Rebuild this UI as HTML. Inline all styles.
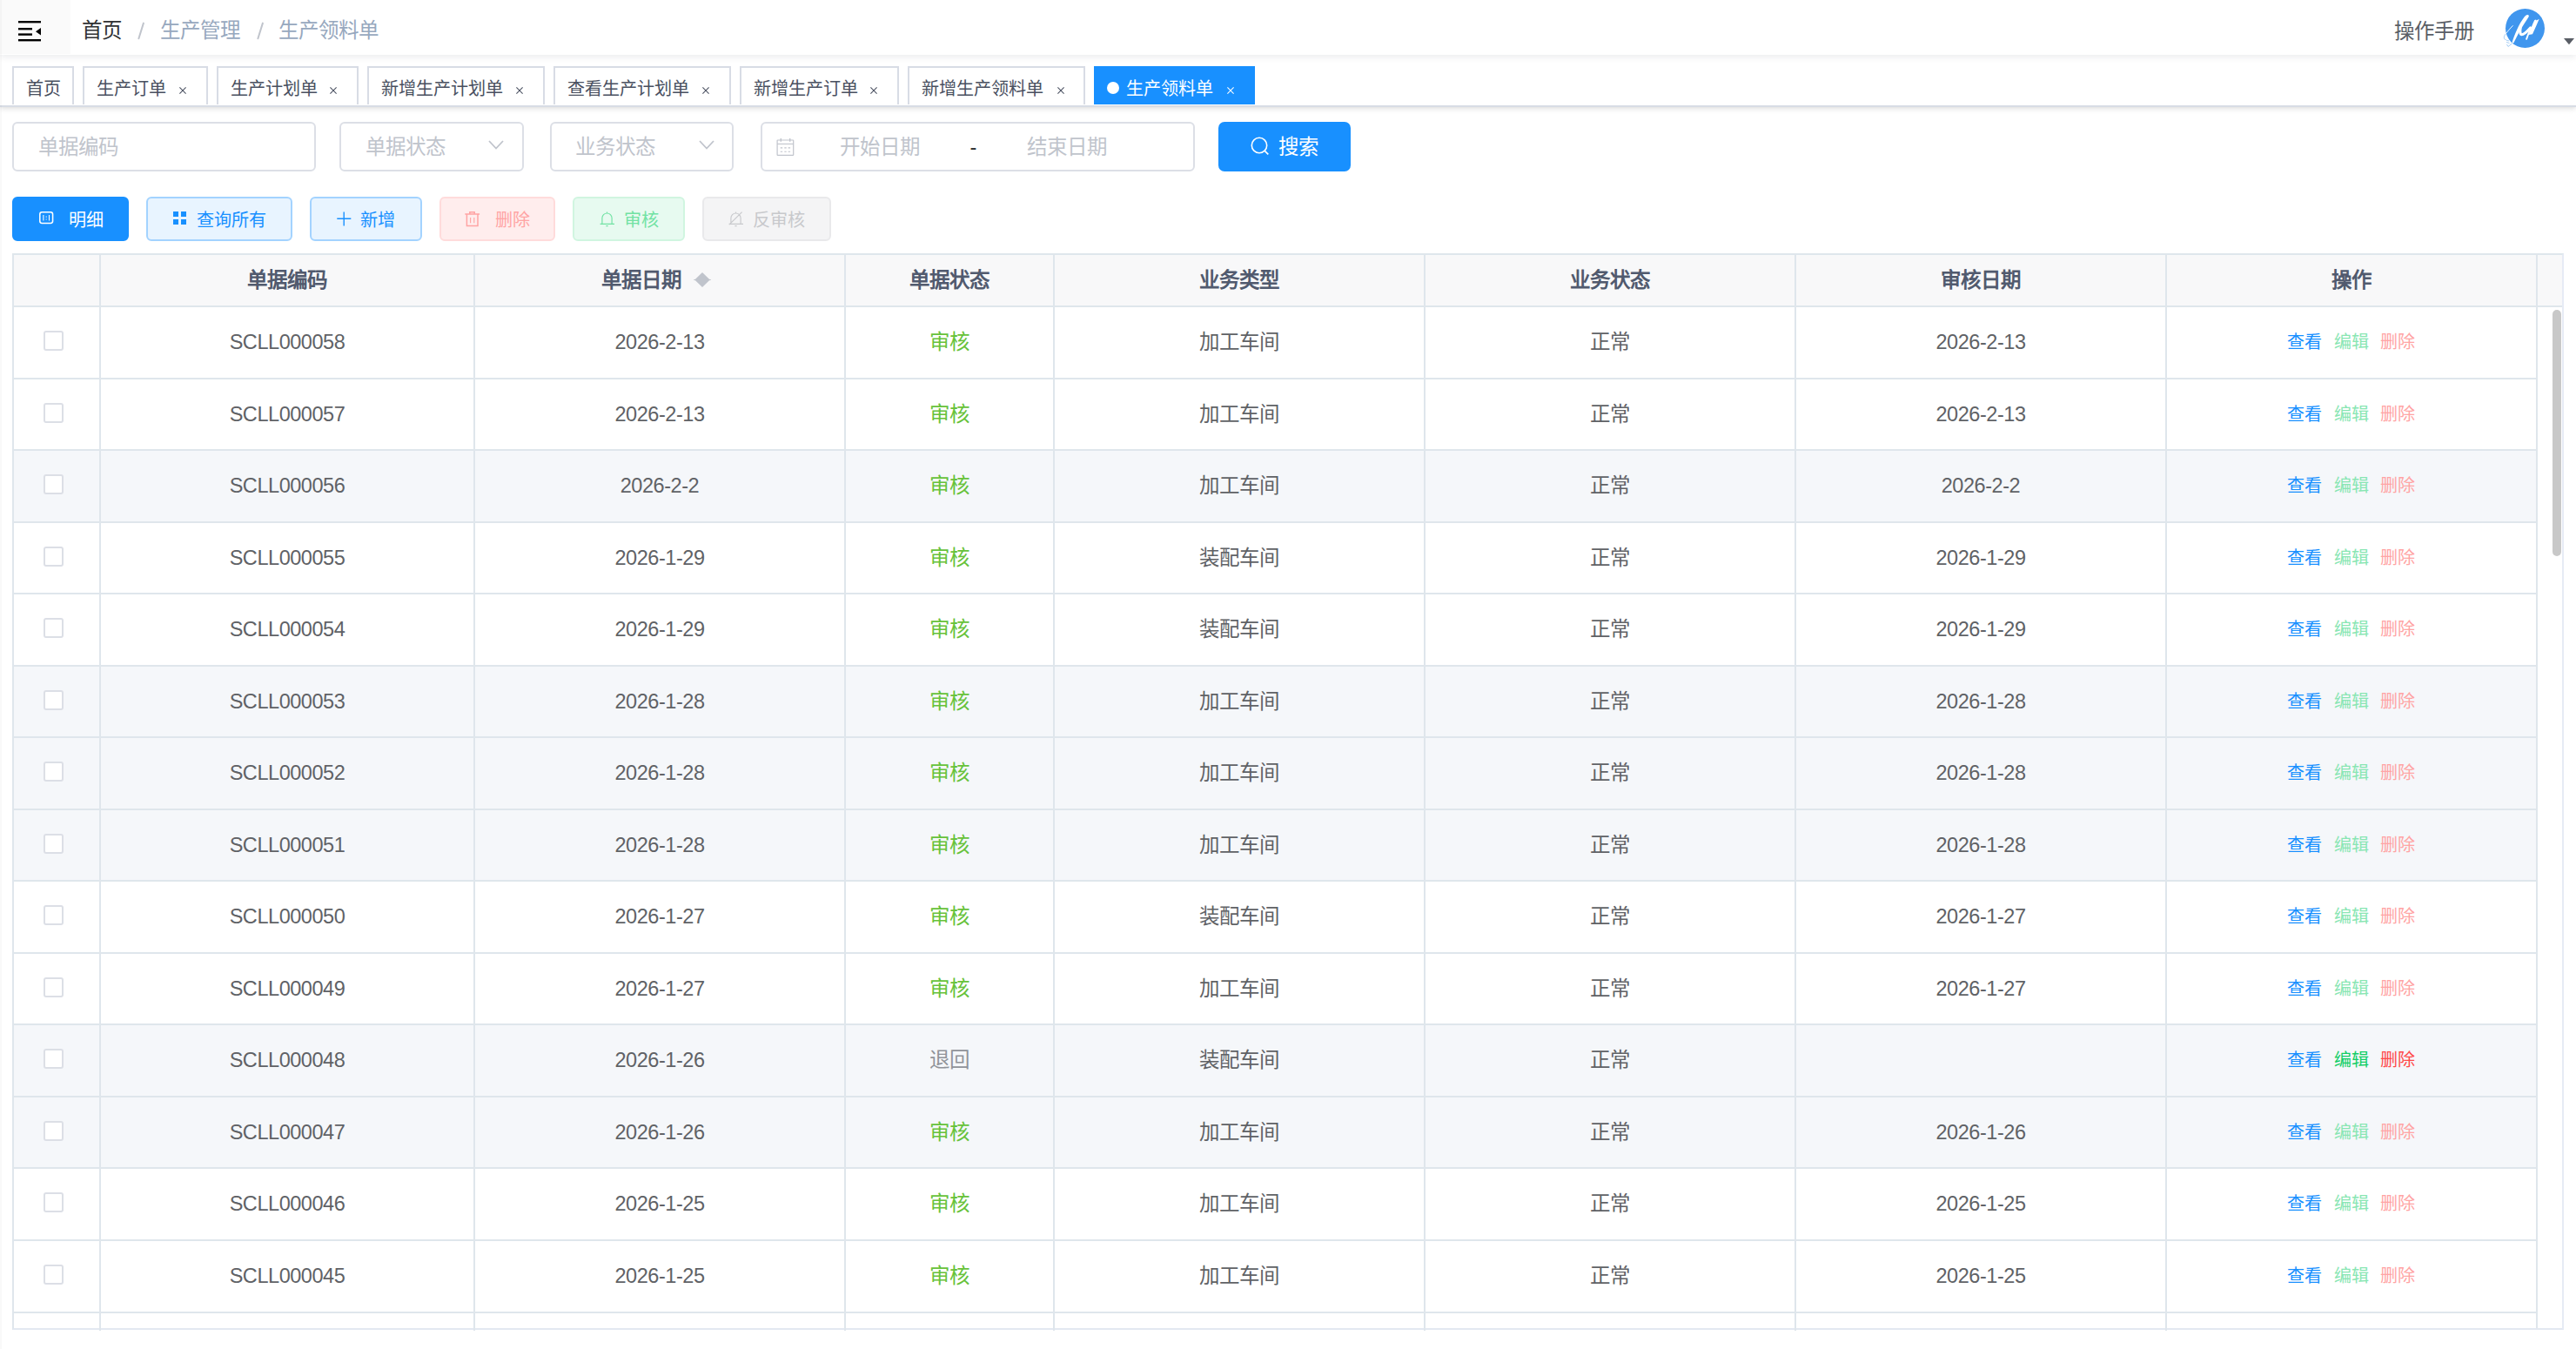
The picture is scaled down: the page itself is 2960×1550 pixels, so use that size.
<!DOCTYPE html><html lang="zh-CN"><head><meta charset="utf-8"><title>生产领料单</title><style>
*{box-sizing:border-box;margin:0;padding:0}
html,body{width:2960px;height:1550px;overflow:hidden;background:#fff;font-family:"Liberation Sans",sans-serif;position:relative}
.a{position:absolute;white-space:nowrap}
.t14{font-size:23.5px;line-height:1}
.t12{font-size:20.1px;line-height:1}
#nav{left:0;top:0;width:2960px;height:63px;background:#fff;box-shadow:0 2px 8px rgba(0,21,41,.09);z-index:3}
#ham{left:0;top:0;width:81px;height:62px;background:#fafafa}
#tags{left:0;top:63px;width:2960px;height:60px;background:#fff;border-bottom:2px solid #d8dce5;box-shadow:0 2px 6px 0 rgba(0,0,0,.12),0 0 3px 0 rgba(0,0,0,.04);z-index:2}
.tag{top:13px;height:44px;border:2px solid #d8dce5;border-bottom:none;background:#fff;color:#495060}
.tag.on{background:#1890ff;border-color:#1890ff;color:#fff}
.inp{top:140px;height:57px;border:2px solid #dcdfe6;border-radius:6px;background:#fff}
.ph{color:#c0c4cc}
.btn{top:226px;height:51px;border:2px solid;border-radius:6px}
#tbl{left:14px;top:291px;width:2932px;height:1237px;border:2px solid #dfe6ec;border-right-color:#e6ebf5;border-bottom-color:#e3e8f1}
.hl{left:0;height:2px;background:#dfe6ec}
.vl{top:0;width:2px;background:#dfe6ec}
.cell{text-align:center;color:#606266}
.num{letter-spacing:-0.45px}
.hd{color:#515a6e;font-weight:700}
.cb{width:23px;height:23px;border:2px solid #dcdfe6;border-radius:3px;background:#fff}
</style></head><body>
<div class="a" style="left:0;top:0;width:2px;height:1550px;background:rgba(0,0,0,.025);z-index:5"></div>
<div id="nav" class="a">
<div id="ham" class="a"></div>
<svg class="a" style="left:21px;top:24px" width="27" height="24" viewBox="0 0 27 24"><rect x="0" y="0" width="26" height="2.4" fill="#000"/><rect x="0" y="8" width="16" height="2.4" fill="#000"/><rect x="0" y="14.4" width="16" height="2.4" fill="#000"/><rect x="0" y="21" width="26" height="2.4" fill="#000"/><path d="M26 8 L26 16.6 L20 12.3 Z" fill="#000"/></svg>
<span class="a t14" style="left:94px;top:24px;color:#303133">首页</span>
<svg class="a" style="left:155px;top:24px" width="14" height="24" viewBox="0 0 14 24"><path d="M9.9 2.6 L4.4 20.2" stroke="#c0c4cc" stroke-width="2" stroke-linecap="round"/></svg>
<span class="a t14" style="left:183.5px;top:24px;color:#97a8be">生产管理</span>
<svg class="a" style="left:291.5px;top:24px" width="14" height="24" viewBox="0 0 14 24"><path d="M9.9 2.6 L4.4 20.2" stroke="#c0c4cc" stroke-width="2" stroke-linecap="round"/></svg>
<span class="a t14" style="left:320px;top:24px;color:#97a8be">生产领料单</span>
<span class="a t14" style="left:2751px;top:25px;color:#5a5e66">操作手册</span>
<div class="a" style="left:2879px;top:10px;width:45px;height:45px;border-radius:50%;background:#4096ee"></div>
<svg class="a" style="left:2870px;top:0px" width="60" height="60" viewBox="0 0 60 60"><path d="M34.4 16.9 C35.9 17 36.2 18.5 35.5 19.6 C33 23.5 30.5 27.5 28.8 30 C26 34.5 23 40 20.5 45 L18.4 49.3 L16.3 49.7 C17.5 45.5 19.5 40 22 34.5 C24.5 29 27.5 23.5 30.8 19.3 C31.8 18 33 16.8 34.4 16.9 Z" fill="#fff"/><path d="M26.2 31.8 C25.4 36.5 25.8 39.6 27.6 39.8 C30 40 34 36 37.6 32" stroke="#fff" stroke-width="3.1" fill="none" stroke-linecap="round"/><path d="M37.6 32.6 C36 37 34.3 41.5 33.1 44.8" stroke="#fff" stroke-width="1.9" fill="none" stroke-linecap="round"/><path d="M42.3 23 L44 22.6 L44.6 23.6 L47.7 21.8 C45.5 27 43 33 40 39.2 L35.6 40 C37.5 34 39.8 28 42.3 23 Z" fill="#fff"/><path d="M17.6 29.3 C14 33 11.5 36 9.3 38.8" stroke="#fff" stroke-width="0.9" fill="none"/><path d="M9.3 38.8 C8.4 40 7.6 41 7.4 42.5 C7.2 44.5 8 45.5 9.5 45.5 M9.8 46.2 L13.2 47 M10 48.5 L13.5 49.5 M10.5 51 L12 53.5 L16.5 50" stroke="#8fc0f2" stroke-width="0.8" fill="none"/></svg>
<svg class="a" style="left:2946px;top:44px" width="12" height="8" viewBox="0 0 12 8"><path d="M0 0 L12 0 L6 7.2 Z" fill="#5a5e66"/></svg>
</div>
<div id="tags" class="a">
<div class="a tag" style="left:14px;width:71px">
<span class="a t12" style="left:14px;top:14px">首页</span>
</div>
<div class="a tag" style="left:95px;width:143.5px">
<span class="a t12" style="left:14px;top:14px">生产订单</span>
<span class="a" style="right:22.5px;top:22px;width:8px;height:8px"><svg width="8" height="8" viewBox="0 0 8 8" style="display:block"><path d="M0.4 0.4 L7.6 7.6 M7.6 0.4 L0.4 7.6" stroke="currentColor" stroke-width="1.05"/></svg></span>
</div>
<div class="a tag" style="left:249px;width:162.5px">
<span class="a t12" style="left:14px;top:14px">生产计划单</span>
<span class="a" style="right:22.5px;top:22px;width:8px;height:8px"><svg width="8" height="8" viewBox="0 0 8 8" style="display:block"><path d="M0.4 0.4 L7.6 7.6 M7.6 0.4 L0.4 7.6" stroke="currentColor" stroke-width="1.05"/></svg></span>
</div>
<div class="a tag" style="left:422px;width:203.5px">
<span class="a t12" style="left:14px;top:14px">新增生产计划单</span>
<span class="a" style="right:22.5px;top:22px;width:8px;height:8px"><svg width="8" height="8" viewBox="0 0 8 8" style="display:block"><path d="M0.4 0.4 L7.6 7.6 M7.6 0.4 L0.4 7.6" stroke="currentColor" stroke-width="1.05"/></svg></span>
</div>
<div class="a tag" style="left:636px;width:203.5px">
<span class="a t12" style="left:14px;top:14px">查看生产计划单</span>
<span class="a" style="right:22.5px;top:22px;width:8px;height:8px"><svg width="8" height="8" viewBox="0 0 8 8" style="display:block"><path d="M0.4 0.4 L7.6 7.6 M7.6 0.4 L0.4 7.6" stroke="currentColor" stroke-width="1.05"/></svg></span>
</div>
<div class="a tag" style="left:850px;width:182.5px">
<span class="a t12" style="left:14px;top:14px">新增生产订单</span>
<span class="a" style="right:22.5px;top:22px;width:8px;height:8px"><svg width="8" height="8" viewBox="0 0 8 8" style="display:block"><path d="M0.4 0.4 L7.6 7.6 M7.6 0.4 L0.4 7.6" stroke="currentColor" stroke-width="1.05"/></svg></span>
</div>
<div class="a tag" style="left:1043px;width:204px">
<span class="a t12" style="left:14px;top:14px">新增生产领料单</span>
<span class="a" style="right:22.5px;top:22px;width:8px;height:8px"><svg width="8" height="8" viewBox="0 0 8 8" style="display:block"><path d="M0.4 0.4 L7.6 7.6 M7.6 0.4 L0.4 7.6" stroke="currentColor" stroke-width="1.05"/></svg></span>
</div>
<div class="a tag on" style="left:1257px;width:185px">
<div class="a" style="left:13px;top:16px;width:14px;height:14px;border-radius:50%;background:#fff"></div>
<span class="a t12" style="left:35px;top:14px">生产领料单</span>
<span class="a" style="right:22.5px;top:22px;width:8px;height:8px"><svg width="8" height="8" viewBox="0 0 8 8" style="display:block"><path d="M0.4 0.4 L7.6 7.6 M7.6 0.4 L0.4 7.6" stroke="currentColor" stroke-width="1.05"/></svg></span>
</div>
</div>
<div class="a inp" style="left:14px;width:349px"><span class="a t14 ph" style="left:28px;top:16px">单据编码</span></div>
<div class="a inp" style="left:390px;width:211.5px"><span class="a t14 ph" style="left:28px;top:16px">单据状态</span><span class="a" style="left:169px;top:19px"><svg width="18" height="11" viewBox="0 0 18 11" style="display:block"><path d="M1 1 L9 9.5 L17 1" fill="none" stroke="#c0c4cc" stroke-width="1.8"/></svg></span></div>
<div class="a inp" style="left:632px;width:210.5px"><span class="a t14 ph" style="left:27px;top:16px">业务状态</span><span class="a" style="left:169px;top:19px"><svg width="18" height="11" viewBox="0 0 18 11" style="display:block"><path d="M1 1 L9 9.5 L17 1" fill="none" stroke="#c0c4cc" stroke-width="1.8"/></svg></span></div>
<div class="a inp" style="left:873.5px;width:499px"><span class="a" style="left:16.5px;top:17px"><svg width="22" height="22" viewBox="0 0 22 22" style="display:block"><rect x="1.1" y="2" width="18.6" height="17.4" rx="0.6" fill="none" stroke="#c0c4cc" stroke-width="1.2"/><path d="M1.1 6.4h18.6" stroke="#c0c4cc" stroke-width="1.1"/><path d="M5.3 0v3.8M15.7 0v3.8" stroke="#c0c4cc" stroke-width="1.4"/><path d="M4.7 10.9h2.5M9.3 10.9h2.4M13.6 10.9h2.5M4.7 15.3h2.5M9.3 15.3h2.4M13.6 15.3h2.5" stroke="#c0c4cc" stroke-width="1.1"/></svg></span><span class="a t14 ph" style="left:89px;top:16px">开始日期</span><span class="a t14" style="left:239px;top:16px;color:#303133">-</span><span class="a t14 ph" style="left:304px;top:16px">结束日期</span></div>
<div class="a" style="left:1400px;top:140px;width:152px;height:57px;background:#1890ff;border-radius:7px"><svg class="a" style="left:36.5px;top:16.5px" width="22" height="22" viewBox="0 0 22 22"><circle cx="10" cy="10" r="8.7" fill="none" stroke="#fff" stroke-width="1.6"/><path d="M16.3 16.3 L20.3 20.3" stroke="#fff" stroke-width="1.7"/></svg><span class="a t14" style="left:69px;top:18px;color:#fff">搜索</span></div>
<div class="a btn" style="left:14px;width:134px;background:#1890ff;border-color:#1890ff;color:#fff"><span class="a" style="left:28.5px;top:15px"><svg width="17" height="15" viewBox="0 0 17 15" style="display:block"><rect x="0.8" y="0.8" width="14.8" height="12.6" rx="2.4" fill="none" stroke="currentColor" stroke-width="1.5"/><path d="M4.9 4v6.6M11.5 4v6.6M8.2 5.6v1.2M8.2 8.4v1.2" stroke="currentColor" stroke-width="1.05"/></svg></span><span class="a t12" style="left:62.5px;top:15px">明细</span></div>
<div class="a btn" style="left:168px;width:167.5px;background:#e8f4ff;border-color:#a3d3ff;color:#1890ff"><span class="a" style="left:28.5px;top:15px"><svg width="16" height="16" viewBox="0 0 16 16" style="display:block"><rect x="0" y="0" width="6" height="6" fill="currentColor"/><rect x="9" y="0" width="6" height="6" fill="currentColor"/><rect x="0" y="9" width="6" height="6" fill="currentColor"/><rect x="9" y="9" width="6" height="6" fill="currentColor"/></svg></span><span class="a t12" style="left:56px;top:15px">查询所有</span></div>
<div class="a btn" style="left:356px;width:128.5px;background:#e8f4ff;border-color:#a3d3ff;color:#1890ff"><span class="a" style="left:28.5px;top:15px"><svg width="17" height="17" viewBox="0 0 17 17" style="display:block"><path d="M8.2 0.5v16M0.3 8.3h16" stroke="currentColor" stroke-width="1.4"/></svg></span><span class="a t12" style="left:56px;top:15px">新增</span></div>
<div class="a btn" style="left:505px;width:133px;background:#ffeded;border-color:#ffdbdb;color:#ffa4a4"><span class="a" style="left:27px;top:15px"><svg width="18" height="18" viewBox="0 0 18 18" style="display:block"><path d="M0.3 3h16.8M5.8 3V0.8h5.4V3M2.4 3v13.6h12.6V3" fill="none" stroke="currentColor" stroke-width="1.5"/><path d="M6.6 7v6.2M10.8 7v6.2" stroke="currentColor" stroke-width="1.1"/></svg></span><span class="a t12" style="left:61.5px;top:15px">删除</span></div>
<div class="a btn" style="left:658px;width:128.5px;background:#e7faf0;border-color:#d0f5e0;color:#71e2a3"><span class="a" style="left:28.5px;top:14.5px"><svg width="18" height="18" viewBox="0 0 18 18" style="display:block"><path d="M0.6 14.4h16.4M2.9 14.4V7.6a5.6 5.6 0 0 1 11.2 0v6.8M8.5 0.6v1.4M7.4 16.6h2.2" fill="none" stroke="currentColor" stroke-width="1.15"/></svg></span><span class="a t12" style="left:57px;top:15px">审核</span></div>
<div class="a btn" style="left:807px;width:147.5px;background:#f4f4f5;border-color:#e9e9eb;color:#c8c9cc"><span class="a" style="left:28px;top:14.5px"><svg width="18" height="18" viewBox="0 0 18 18" style="display:block"><path d="M0.6 14.4h16.4M2.9 14.4V7.6a5.6 5.6 0 0 1 11.2 0v6.8M8.5 0.6v1.4M7.4 16.6h2.2M0.8 15.2L15.6 0.6" fill="none" stroke="currentColor" stroke-width="1.15"/></svg></span><span class="a t12" style="left:55.5px;top:15px">反审核</span></div>
<div id="tbl" class="a">
<div class="a" style="left:0;top:0;width:2928px;height:58px;background:#f8f8f9"></div>
<div class="a" style="left:0;top:225px;width:2898px;height:81px;background:#f5f7fa"></div>
<div class="a" style="left:0;top:473px;width:2898px;height:80px;background:#f5f7fa"></div>
<div class="a" style="left:0;top:555px;width:2898px;height:81px;background:#f5f7fa"></div>
<div class="a" style="left:0;top:638px;width:2898px;height:80px;background:#f5f7fa"></div>
<div class="a" style="left:0;top:885px;width:2898px;height:81px;background:#f5f7fa"></div>
<div class="a" style="left:0;top:968px;width:2898px;height:80px;background:#f5f7fa"></div>
<div class="a hl" style="top:58px;width:2928px"></div>
<div class="a hl" style="top:141px;width:2898px"></div>
<div class="a hl" style="top:223px;width:2898px"></div>
<div class="a hl" style="top:306px;width:2898px"></div>
<div class="a hl" style="top:388px;width:2898px"></div>
<div class="a hl" style="top:471px;width:2898px"></div>
<div class="a hl" style="top:553px;width:2898px"></div>
<div class="a hl" style="top:636px;width:2898px"></div>
<div class="a hl" style="top:718px;width:2898px"></div>
<div class="a hl" style="top:801px;width:2898px"></div>
<div class="a hl" style="top:883px;width:2898px"></div>
<div class="a hl" style="top:966px;width:2898px"></div>
<div class="a hl" style="top:1048px;width:2898px"></div>
<div class="a hl" style="top:1131px;width:2898px"></div>
<div class="a hl" style="top:1214px;width:2898px"></div>
<div class="a vl" style="left:98px;height:1236px;z-index:1"></div>
<div class="a vl" style="left:528px;height:1236px;z-index:1"></div>
<div class="a vl" style="left:954px;height:1236px;z-index:1"></div>
<div class="a vl" style="left:1194px;height:1236px;z-index:1"></div>
<div class="a vl" style="left:1620px;height:1236px;z-index:1"></div>
<div class="a vl" style="left:2046px;height:1236px;z-index:1"></div>
<div class="a vl" style="left:2472px;height:1236px;z-index:1"></div>
<div class="a vl" style="left:2898px;height:1233px;z-index:1"></div>
<div class="a t14 hd" style="left:100px;top:18px;width:428px;text-align:center">单据编码</div>
<div class="a t14 hd" style="left:530px;top:18px;width:424px;text-align:center">单据日期<span style="display:inline-block;width:42.5px"></span></div>
<div class="a t14 hd" style="left:956px;top:18px;width:238px;text-align:center">单据状态</div>
<div class="a t14 hd" style="left:1196px;top:18px;width:424px;text-align:center">业务类型</div>
<div class="a t14 hd" style="left:1622px;top:18px;width:424px;text-align:center">业务状态</div>
<div class="a t14 hd" style="left:2048px;top:18px;width:424px;text-align:center">审核日期</div>
<div class="a t14 hd" style="left:2474px;top:18px;width:424px;text-align:center">操作</div>
<svg class="a" style="left:781px;top:20px" width="20" height="17" viewBox="0 0 20 17"><path d="M10 0 L18 7.8 L20 8.2 L20 8.8 L18 9.2 L10 17 L2 9.2 L0 8.8 L0 8.2 L2 7.8 Z" fill="#c0c4cc"/></svg>
<div class="a cb" style="left:34px;top:87px"></div>
<div class="a t14 cell num" style="left:100px;top:89px;width:428px;color:#606266">SCLL000058</div>
<div class="a t14 cell num" style="left:530px;top:89px;width:424px;color:#606266">2026-2-13</div>
<div class="a t14 cell" style="left:956px;top:89px;width:238px;color:#67c23a">审核</div>
<div class="a t14 cell" style="left:1196px;top:89px;width:424px;color:#606266">加工车间</div>
<div class="a t14 cell" style="left:1622px;top:89px;width:424px;color:#606266">正常</div>
<div class="a t14 cell num" style="left:2048px;top:89px;width:424px;color:#606266">2026-2-13</div>
<div class="a t12" style="left:2612px;top:90px;color:#1890ff">查看</div>
<div class="a t12" style="left:2666px;top:90px;color:#89e6b3">编辑</div>
<div class="a t12" style="left:2719px;top:90px;color:#ffa4a4">删除</div>
<div class="a cb" style="left:34px;top:170px"></div>
<div class="a t14 cell num" style="left:100px;top:172px;width:428px;color:#606266">SCLL000057</div>
<div class="a t14 cell num" style="left:530px;top:172px;width:424px;color:#606266">2026-2-13</div>
<div class="a t14 cell" style="left:956px;top:172px;width:238px;color:#67c23a">审核</div>
<div class="a t14 cell" style="left:1196px;top:172px;width:424px;color:#606266">加工车间</div>
<div class="a t14 cell" style="left:1622px;top:172px;width:424px;color:#606266">正常</div>
<div class="a t14 cell num" style="left:2048px;top:172px;width:424px;color:#606266">2026-2-13</div>
<div class="a t12" style="left:2612px;top:173px;color:#1890ff">查看</div>
<div class="a t12" style="left:2666px;top:173px;color:#89e6b3">编辑</div>
<div class="a t12" style="left:2719px;top:173px;color:#ffa4a4">删除</div>
<div class="a cb" style="left:34px;top:252px"></div>
<div class="a t14 cell num" style="left:100px;top:254px;width:428px;color:#606266">SCLL000056</div>
<div class="a t14 cell num" style="left:530px;top:254px;width:424px;color:#606266">2026-2-2</div>
<div class="a t14 cell" style="left:956px;top:254px;width:238px;color:#67c23a">审核</div>
<div class="a t14 cell" style="left:1196px;top:254px;width:424px;color:#606266">加工车间</div>
<div class="a t14 cell" style="left:1622px;top:254px;width:424px;color:#606266">正常</div>
<div class="a t14 cell num" style="left:2048px;top:254px;width:424px;color:#606266">2026-2-2</div>
<div class="a t12" style="left:2612px;top:255px;color:#1890ff">查看</div>
<div class="a t12" style="left:2666px;top:255px;color:#89e6b3">编辑</div>
<div class="a t12" style="left:2719px;top:255px;color:#ffa4a4">删除</div>
<div class="a cb" style="left:34px;top:335px"></div>
<div class="a t14 cell num" style="left:100px;top:337px;width:428px;color:#606266">SCLL000055</div>
<div class="a t14 cell num" style="left:530px;top:337px;width:424px;color:#606266">2026-1-29</div>
<div class="a t14 cell" style="left:956px;top:337px;width:238px;color:#67c23a">审核</div>
<div class="a t14 cell" style="left:1196px;top:337px;width:424px;color:#606266">装配车间</div>
<div class="a t14 cell" style="left:1622px;top:337px;width:424px;color:#606266">正常</div>
<div class="a t14 cell num" style="left:2048px;top:337px;width:424px;color:#606266">2026-1-29</div>
<div class="a t12" style="left:2612px;top:338px;color:#1890ff">查看</div>
<div class="a t12" style="left:2666px;top:338px;color:#89e6b3">编辑</div>
<div class="a t12" style="left:2719px;top:338px;color:#ffa4a4">删除</div>
<div class="a cb" style="left:34px;top:417px"></div>
<div class="a t14 cell num" style="left:100px;top:419px;width:428px;color:#606266">SCLL000054</div>
<div class="a t14 cell num" style="left:530px;top:419px;width:424px;color:#606266">2026-1-29</div>
<div class="a t14 cell" style="left:956px;top:419px;width:238px;color:#67c23a">审核</div>
<div class="a t14 cell" style="left:1196px;top:419px;width:424px;color:#606266">装配车间</div>
<div class="a t14 cell" style="left:1622px;top:419px;width:424px;color:#606266">正常</div>
<div class="a t14 cell num" style="left:2048px;top:419px;width:424px;color:#606266">2026-1-29</div>
<div class="a t12" style="left:2612px;top:420px;color:#1890ff">查看</div>
<div class="a t12" style="left:2666px;top:420px;color:#89e6b3">编辑</div>
<div class="a t12" style="left:2719px;top:420px;color:#ffa4a4">删除</div>
<div class="a cb" style="left:34px;top:500px"></div>
<div class="a t14 cell num" style="left:100px;top:502px;width:428px;color:#606266">SCLL000053</div>
<div class="a t14 cell num" style="left:530px;top:502px;width:424px;color:#606266">2026-1-28</div>
<div class="a t14 cell" style="left:956px;top:502px;width:238px;color:#67c23a">审核</div>
<div class="a t14 cell" style="left:1196px;top:502px;width:424px;color:#606266">加工车间</div>
<div class="a t14 cell" style="left:1622px;top:502px;width:424px;color:#606266">正常</div>
<div class="a t14 cell num" style="left:2048px;top:502px;width:424px;color:#606266">2026-1-28</div>
<div class="a t12" style="left:2612px;top:503px;color:#1890ff">查看</div>
<div class="a t12" style="left:2666px;top:503px;color:#89e6b3">编辑</div>
<div class="a t12" style="left:2719px;top:503px;color:#ffa4a4">删除</div>
<div class="a cb" style="left:34px;top:582px"></div>
<div class="a t14 cell num" style="left:100px;top:584px;width:428px;color:#606266">SCLL000052</div>
<div class="a t14 cell num" style="left:530px;top:584px;width:424px;color:#606266">2026-1-28</div>
<div class="a t14 cell" style="left:956px;top:584px;width:238px;color:#67c23a">审核</div>
<div class="a t14 cell" style="left:1196px;top:584px;width:424px;color:#606266">加工车间</div>
<div class="a t14 cell" style="left:1622px;top:584px;width:424px;color:#606266">正常</div>
<div class="a t14 cell num" style="left:2048px;top:584px;width:424px;color:#606266">2026-1-28</div>
<div class="a t12" style="left:2612px;top:585px;color:#1890ff">查看</div>
<div class="a t12" style="left:2666px;top:585px;color:#89e6b3">编辑</div>
<div class="a t12" style="left:2719px;top:585px;color:#ffa4a4">删除</div>
<div class="a cb" style="left:34px;top:665px"></div>
<div class="a t14 cell num" style="left:100px;top:667px;width:428px;color:#606266">SCLL000051</div>
<div class="a t14 cell num" style="left:530px;top:667px;width:424px;color:#606266">2026-1-28</div>
<div class="a t14 cell" style="left:956px;top:667px;width:238px;color:#67c23a">审核</div>
<div class="a t14 cell" style="left:1196px;top:667px;width:424px;color:#606266">加工车间</div>
<div class="a t14 cell" style="left:1622px;top:667px;width:424px;color:#606266">正常</div>
<div class="a t14 cell num" style="left:2048px;top:667px;width:424px;color:#606266">2026-1-28</div>
<div class="a t12" style="left:2612px;top:668px;color:#1890ff">查看</div>
<div class="a t12" style="left:2666px;top:668px;color:#89e6b3">编辑</div>
<div class="a t12" style="left:2719px;top:668px;color:#ffa4a4">删除</div>
<div class="a cb" style="left:34px;top:747px"></div>
<div class="a t14 cell num" style="left:100px;top:749px;width:428px;color:#606266">SCLL000050</div>
<div class="a t14 cell num" style="left:530px;top:749px;width:424px;color:#606266">2026-1-27</div>
<div class="a t14 cell" style="left:956px;top:749px;width:238px;color:#67c23a">审核</div>
<div class="a t14 cell" style="left:1196px;top:749px;width:424px;color:#606266">装配车间</div>
<div class="a t14 cell" style="left:1622px;top:749px;width:424px;color:#606266">正常</div>
<div class="a t14 cell num" style="left:2048px;top:749px;width:424px;color:#606266">2026-1-27</div>
<div class="a t12" style="left:2612px;top:750px;color:#1890ff">查看</div>
<div class="a t12" style="left:2666px;top:750px;color:#89e6b3">编辑</div>
<div class="a t12" style="left:2719px;top:750px;color:#ffa4a4">删除</div>
<div class="a cb" style="left:34px;top:830px"></div>
<div class="a t14 cell num" style="left:100px;top:832px;width:428px;color:#606266">SCLL000049</div>
<div class="a t14 cell num" style="left:530px;top:832px;width:424px;color:#606266">2026-1-27</div>
<div class="a t14 cell" style="left:956px;top:832px;width:238px;color:#67c23a">审核</div>
<div class="a t14 cell" style="left:1196px;top:832px;width:424px;color:#606266">加工车间</div>
<div class="a t14 cell" style="left:1622px;top:832px;width:424px;color:#606266">正常</div>
<div class="a t14 cell num" style="left:2048px;top:832px;width:424px;color:#606266">2026-1-27</div>
<div class="a t12" style="left:2612px;top:833px;color:#1890ff">查看</div>
<div class="a t12" style="left:2666px;top:833px;color:#89e6b3">编辑</div>
<div class="a t12" style="left:2719px;top:833px;color:#ffa4a4">删除</div>
<div class="a cb" style="left:34px;top:912px"></div>
<div class="a t14 cell num" style="left:100px;top:914px;width:428px;color:#606266">SCLL000048</div>
<div class="a t14 cell num" style="left:530px;top:914px;width:424px;color:#606266">2026-1-26</div>
<div class="a t14 cell" style="left:956px;top:914px;width:238px;color:#909399">退回</div>
<div class="a t14 cell" style="left:1196px;top:914px;width:424px;color:#606266">装配车间</div>
<div class="a t14 cell" style="left:1622px;top:914px;width:424px;color:#606266">正常</div>
<div class="a t14 cell" style="left:2048px;top:914px;width:424px;color:#606266"></div>
<div class="a t12" style="left:2612px;top:915px;color:#1890ff">查看</div>
<div class="a t12" style="left:2666px;top:915px;color:#13ce66">编辑</div>
<div class="a t12" style="left:2719px;top:915px;color:#ff4949">删除</div>
<div class="a cb" style="left:34px;top:995px"></div>
<div class="a t14 cell num" style="left:100px;top:997px;width:428px;color:#606266">SCLL000047</div>
<div class="a t14 cell num" style="left:530px;top:997px;width:424px;color:#606266">2026-1-26</div>
<div class="a t14 cell" style="left:956px;top:997px;width:238px;color:#67c23a">审核</div>
<div class="a t14 cell" style="left:1196px;top:997px;width:424px;color:#606266">加工车间</div>
<div class="a t14 cell" style="left:1622px;top:997px;width:424px;color:#606266">正常</div>
<div class="a t14 cell num" style="left:2048px;top:997px;width:424px;color:#606266">2026-1-26</div>
<div class="a t12" style="left:2612px;top:998px;color:#1890ff">查看</div>
<div class="a t12" style="left:2666px;top:998px;color:#89e6b3">编辑</div>
<div class="a t12" style="left:2719px;top:998px;color:#ffa4a4">删除</div>
<div class="a cb" style="left:34px;top:1077px"></div>
<div class="a t14 cell num" style="left:100px;top:1079px;width:428px;color:#606266">SCLL000046</div>
<div class="a t14 cell num" style="left:530px;top:1079px;width:424px;color:#606266">2026-1-25</div>
<div class="a t14 cell" style="left:956px;top:1079px;width:238px;color:#67c23a">审核</div>
<div class="a t14 cell" style="left:1196px;top:1079px;width:424px;color:#606266">加工车间</div>
<div class="a t14 cell" style="left:1622px;top:1079px;width:424px;color:#606266">正常</div>
<div class="a t14 cell num" style="left:2048px;top:1079px;width:424px;color:#606266">2026-1-25</div>
<div class="a t12" style="left:2612px;top:1080px;color:#1890ff">查看</div>
<div class="a t12" style="left:2666px;top:1080px;color:#89e6b3">编辑</div>
<div class="a t12" style="left:2719px;top:1080px;color:#ffa4a4">删除</div>
<div class="a cb" style="left:34px;top:1160px"></div>
<div class="a t14 cell num" style="left:100px;top:1162px;width:428px;color:#606266">SCLL000045</div>
<div class="a t14 cell num" style="left:530px;top:1162px;width:424px;color:#606266">2026-1-25</div>
<div class="a t14 cell" style="left:956px;top:1162px;width:238px;color:#67c23a">审核</div>
<div class="a t14 cell" style="left:1196px;top:1162px;width:424px;color:#606266">加工车间</div>
<div class="a t14 cell" style="left:1622px;top:1162px;width:424px;color:#606266">正常</div>
<div class="a t14 cell num" style="left:2048px;top:1162px;width:424px;color:#606266">2026-1-25</div>
<div class="a t12" style="left:2612px;top:1163px;color:#1890ff">查看</div>
<div class="a t12" style="left:2666px;top:1163px;color:#89e6b3">编辑</div>
<div class="a t12" style="left:2719px;top:1163px;color:#ffa4a4">删除</div>
<div class="a" style="left:2917px;top:63px;width:10px;height:283px;border-radius:5px;background:#c8c8c8"></div>
</div>
</body></html>
